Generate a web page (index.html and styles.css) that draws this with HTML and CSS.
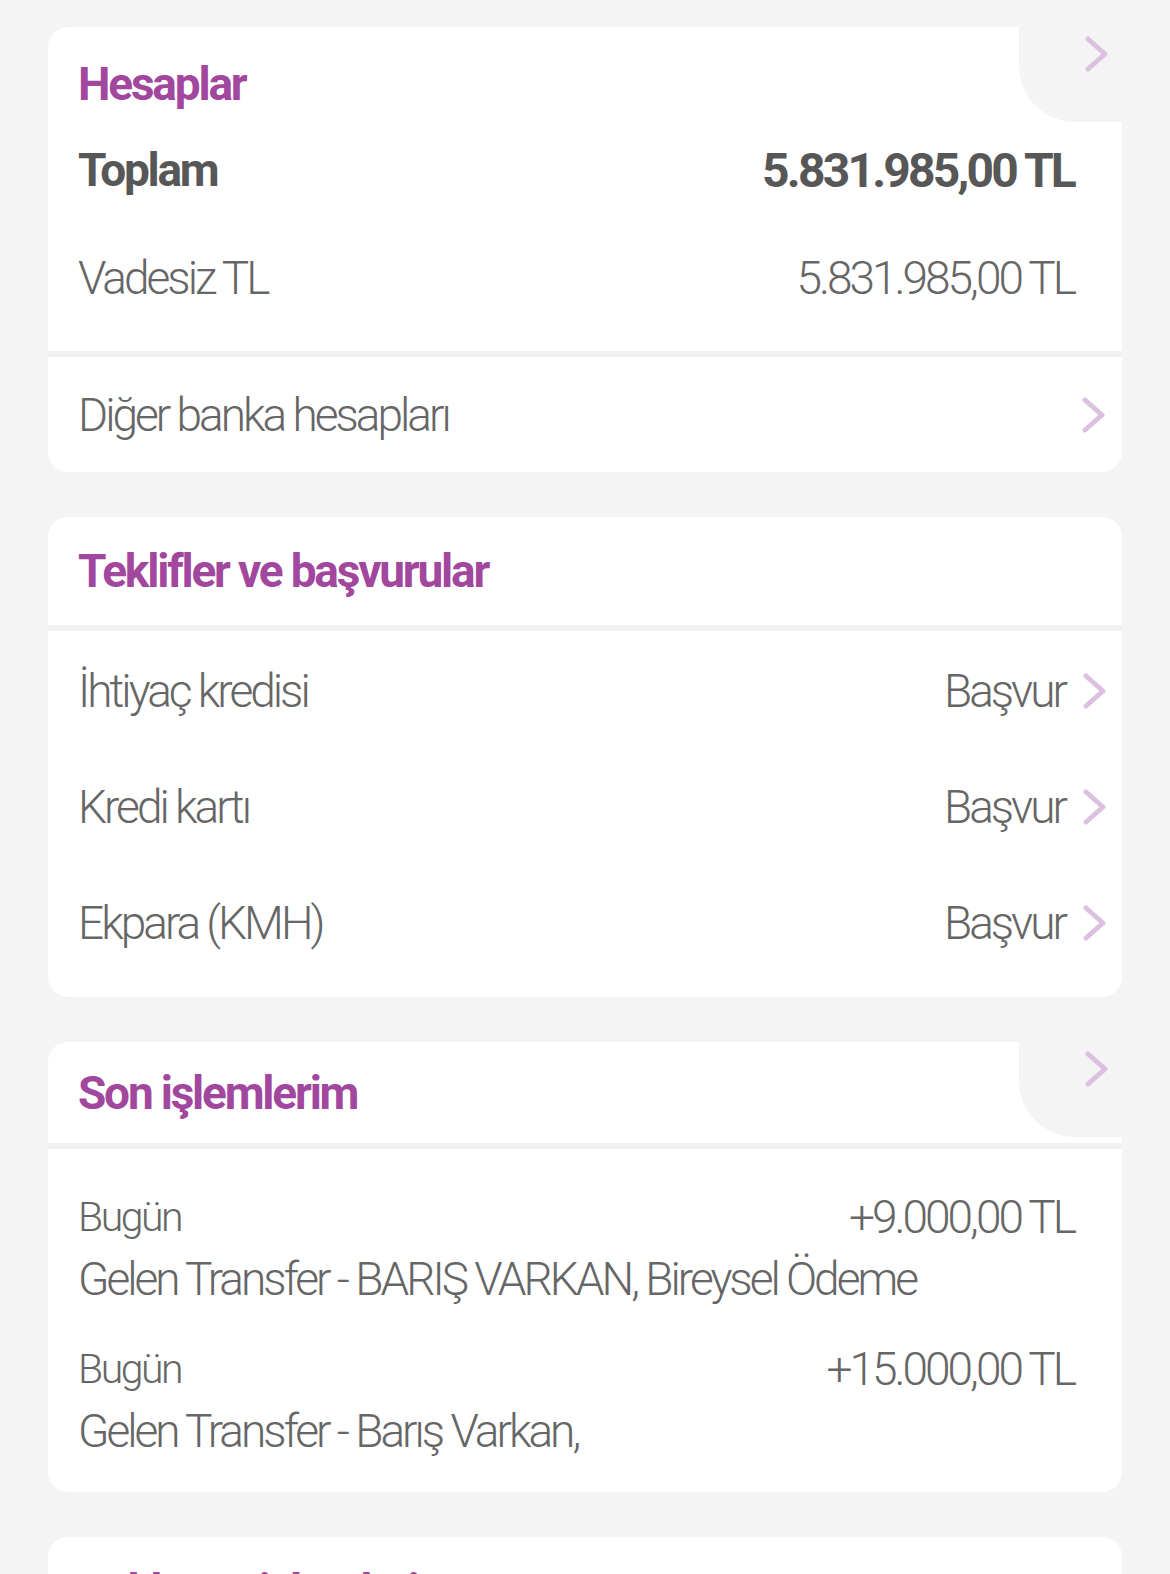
FILE: index.html
```html
<!DOCTYPE html>
<html lang="tr">
<head>
<meta charset="utf-8">
<title>Hesaplar</title>
<link rel="stylesheet" href="styles.css">
</head>
<body>
<main class="page">
  <section class="card">
    <div class="block">
      <div class="card-head"><h2 class="title">Hesaplar</h2></div>
      <div class="row"><span class="strong">Toplam</span><span class="strong num">5.831.985,00 TL</span></div>
      <div class="row"><span>Vadesiz TL</span><span class="num">5.831.985,00 TL</span></div>
      <div class="pad-bottom"></div>
    </div>
    <div class="block">
      <div class="row link-row"><span>Diğer banka hesapları</span><svg class="chev" viewBox="0 0 24 36"><path d="M3 3 L20 18 L3 33"/></svg></div>
    </div>
    <div class="notch"><svg class="chev" viewBox="0 0 24 36"><path d="M3 3 L20 18 L3 33"/></svg></div>
  </section>

  <section class="card">
    <div class="block head-block"><h2 class="title">Teklifler ve başvurular</h2></div>
    <div class="block list">
      <div class="row apply"><span>İhtiyaç kredisi</span><span class="action">Başvur<svg class="chev" viewBox="0 0 24 36"><path d="M3 3 L20 18 L3 33"/></svg></span></div>
      <div class="row apply"><span>Kredi kartı</span><span class="action">Başvur<svg class="chev" viewBox="0 0 24 36"><path d="M3 3 L20 18 L3 33"/></svg></span></div>
      <div class="row apply"><span>Ekpara (KMH)</span><span class="action">Başvur<svg class="chev" viewBox="0 0 24 36"><path d="M3 3 L20 18 L3 33"/></svg></span></div>
    </div>
  </section>

  <section class="card">
    <div class="block head-block head-short"><h2 class="title">Son işlemlerim</h2></div>
    <div class="block tx-list">
      <div class="tx">
        <div class="tx-line"><span class="date">Bugün</span><span class="num">+9.000,00 TL</span></div>
        <div class="tx-line"><span>Gelen Transfer - BARIŞ VARKAN, Bireysel Ödeme</span></div>
      </div>
      <div class="tx">
        <div class="tx-line"><span class="date">Bugün</span><span class="num">+15.000,00 TL</span></div>
        <div class="tx-line"><span>Gelen Transfer - Barış Varkan,</span></div>
      </div>
    </div>
    <div class="notch"><svg class="chev" viewBox="0 0 24 36"><path d="M3 3 L20 18 L3 33"/></svg></div>
  </section>

  <section class="card last">
    <div class="block head-block"><h2 class="title">Bekleyen işlemlerim</h2></div>
  </section>
</main>
</body>
</html>
```

FILE: styles.css
```css
* { box-sizing: border-box; }
html, body {
  margin: 0;
  padding: 0;
  background: #f4f4f4;
}
body {
  font-family: "Roboto", "Liberation Sans", sans-serif;
  font-weight: 300;
  color: #666666;
  font-size: 46px;
  letter-spacing: -3px;
  width: 1170px;
  height: 1574px;
  overflow: hidden;
}
.page {
  display: flex;
  flex-direction: column;
  gap: 45px;
  padding: 27px 48px 0 48px;
}
.card {
  position: relative;
  background: #f1f1f1;
  border-radius: 20px;
  overflow: hidden;
  display: flex;
  flex-direction: column;
  gap: 6px;
}
.block {
  background: #fff;
}
.card-head {
  padding: 25px 30px 0;
  height: 89px;
}
.title {
  margin: 0;
  font-size: 46px;
  line-height: 64px;
  font-weight: 700;
  color: #a1479e;
  letter-spacing: -2.2px;
  white-space: nowrap;
}
.row {
  height: 108px;
  display: flex;
  align-items: center;
  justify-content: space-between;
  padding: 0 48px 0 30px;
}
.strong {
  font-weight: 700;
  color: #575757;
  letter-spacing: -2.3px;
}
.strong.num { font-size: 48px; letter-spacing: -2.8px; }
.pad-bottom { height: 19px; }
.link-row {
  height: 115px;
  padding-right: 16px;
}
.chev {
  width: 24px;
  height: 36px;
  flex: none;
}
.chev path {
  fill: none;
  stroke: #dcc0e0;
  stroke-width: 5;
  stroke-linecap: round;
  stroke-linejoin: round;
}
.notch {
  position: absolute;
  top: 0;
  right: 0;
  width: 103px;
  height: 95px;
  background: #f4f4f4;
  border-bottom-left-radius: 56px;
  display: flex;
  justify-content: flex-end;
  padding: 9px 13px 0 0;
}
.head-block {
  height: 108px;
  flex: none;
  display: flex;
  align-items: center;
  padding: 0 30px;
}
.head-short { height: 101px; }
.list {
  padding: 2px 0 16px;
}
.apply {
  height: 116px;
  padding-right: 15px;
}
.action {
  display: flex;
  align-items: center;
  gap: 18px;
}
.tx-list {
  padding: 37px 48px 30px 30px;
  display: flex;
  flex-direction: column;
  gap: 28px;
}
.tx-line {
  height: 62px;
  display: flex;
  align-items: center;
  justify-content: space-between;
  white-space: nowrap;
}
.date { font-size: 41px; letter-spacing: -2.5px; }
.last { height: 44px; border-bottom-left-radius: 0; border-bottom-right-radius: 0; }
```
